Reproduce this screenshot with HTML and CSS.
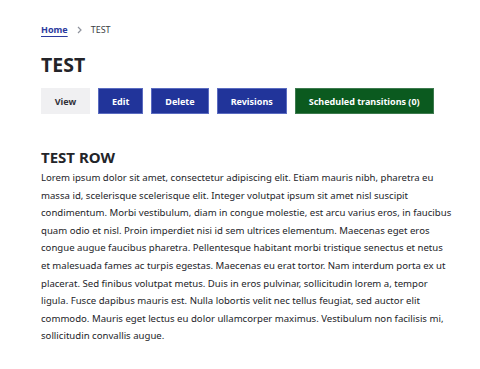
FILE: index.html
```html
<!DOCTYPE html>
<html lang="en">
<head>
    <meta charset="UTF-8">
    <meta name="viewport" content="width=device-width, initial-scale=1.0">
    <title>TEST</title>
    <link rel="stylesheet" href="styles.css">
</head>
<body>
    <div class="page">
        <nav class="breadcrumb">
            <a href="#" class="crumb-link">Home</a>
            <span class="crumb-sep">
                <svg width="7" height="8" viewBox="0 0 7 8"><path d="M2 1l3 3-3 3" fill="none" stroke="#8e929c" stroke-width="1.2"/></svg>
            </span>
            <span class="crumb-current">TEST</span>
        </nav>

        <h1 class="page-title">TEST</h1>

        <div class="tabs">
            <a href="#" class="tab tab-view">View</a>
            <a href="#" class="tab tab-blue">Edit</a>
            <a href="#" class="tab tab-blue">Delete</a>
            <a href="#" class="tab tab-blue">Revisions</a>
            <a href="#" class="tab tab-green">Scheduled transitions (0)</a>
        </div>

        <div class="content">
            <h2 class="row-title">TEST ROW</h2>
            <p class="row-text">Lorem ipsum dolor sit amet, consectetur adipiscing elit. Etiam mauris nibh, pharetra eu massa id, scelerisque scelerisque elit. Integer volutpat ipsum sit amet nisl suscipit condimentum. Morbi vestibulum, diam in congue molestie, est arcu varius eros, in faucibus quam odio et nisl. Proin imperdiet nisi id sem ultrices elementum. Maecenas eget eros congue augue faucibus pharetra. Pellentesque habitant morbi tristique senectus et netus et malesuada fames ac turpis egestas. Maecenas eu erat tortor. Nam interdum porta ex ut placerat. Sed finibus volutpat metus. Duis in eros pulvinar, sollicitudin lorem a, tempor ligula. Fusce dapibus mauris est. Nulla lobortis velit nec tellus feugiat, sed auctor elit commodo. Mauris eget lectus eu dolor ullamcorper maximus. Vestibulum non facilisis mi, sollicitudin convallis augue.</p>
        </div>
    </div>
</body>
</html>
```

FILE: styles.css
```css
body {
    margin: 0;
    background: #ffffff;
    color: #232429;
    font-family: "Noto Sans", "Open Sans", sans-serif;
}
.page {
    padding: 22px 27px 20px 41px;
}
.breadcrumb {
    display: flex;
    align-items: center;
    font-size: 9px;
    line-height: 16px;
}
.crumb-link {
    color: #2b3a9e;
    font-weight: bold;
    text-decoration: underline;
    text-underline-offset: 3px;
}
.crumb-sep {
    display: flex;
    margin: 0 8px 0 8px;
}
.crumb-current {
    color: #3b3d45;
}
.page-title {
    font-size: 19.5px;
    font-weight: bold;
    margin: 13px 0 0;
    line-height: 28px;
}
.tabs {
    display: flex;
    gap: 8px;
    margin-top: 9px;
}
.tab {
    display: flex;
    align-items: center;
    justify-content: center;
    height: 26px;
    box-sizing: border-box;
    font-size: 9px;
    font-weight: bold;
    text-decoration: none;
    white-space: nowrap;
    color: #ffffff;
}
.tab-view {
    width: 49px;
    background: #f0f0f2;
    color: #303139;
}
.tab-blue {
    padding: 0 13px;
    background: #21349a;
    border: 1px solid #5a6bc0;
}
.tab-green {
    padding: 0 13px;
    background: #0b5a1f;
    border: 1px solid #3d7a4e;
}
.content {
    margin-top: 34px;
}
.row-title {
    font-size: 15px;
    font-weight: bold;
    margin: 0;
    line-height: 18px;
}
.row-text {
    margin: 3px 0 0;
    font-size: 9.6px;
    line-height: 17.6px;
    color: #232429;
}
```
